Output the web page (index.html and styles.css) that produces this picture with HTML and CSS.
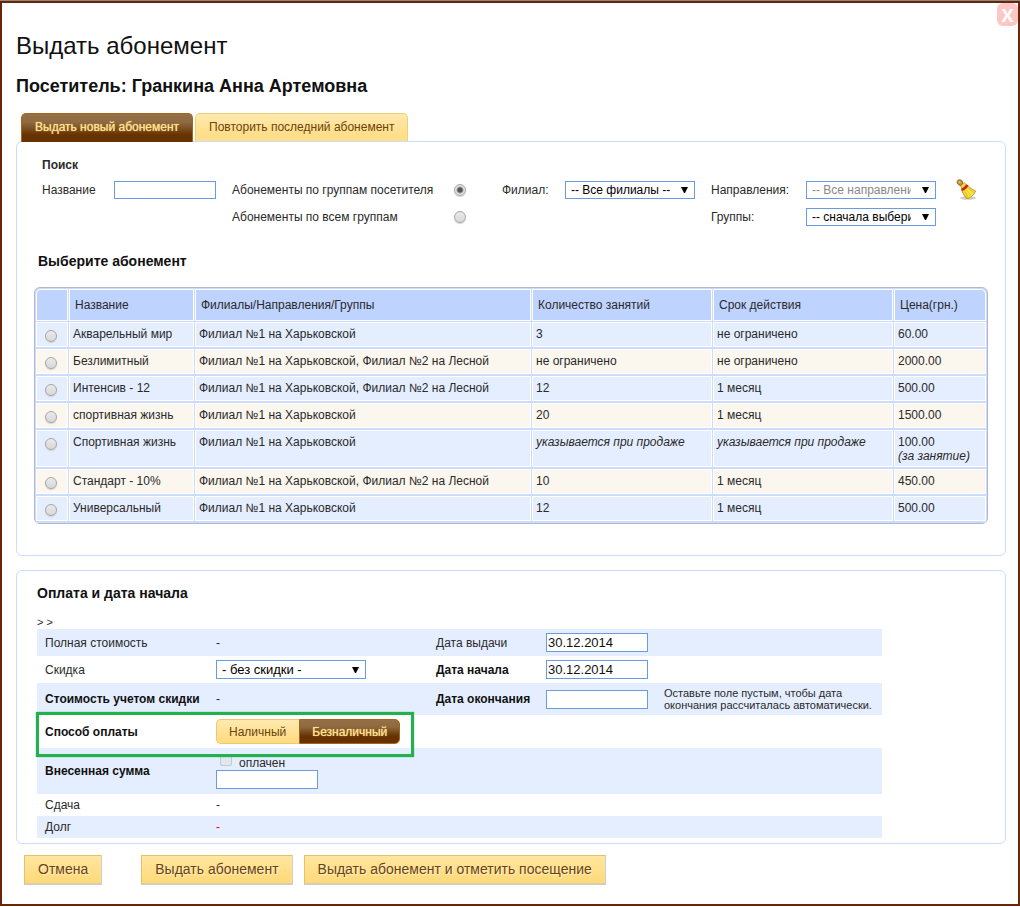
FILE: index.html
```html
<!DOCTYPE html>
<html lang="ru">
<head>
<meta charset="utf-8">
<title>Выдать абонемент</title>
<link rel="stylesheet" href="styles.css">
</head>
<body>
<main class="dialog">
  <button class="close" type="button" aria-label="Закрыть">X</button>
  <h1 class="title">Выдать абонемент</h1>
  <h2 class="visitor">Посетитель: Гранкина Анна Артемовна</h2>

  <nav class="tabs">
    <button class="tab tab-active" type="button">Выдать новый абонемент</button>
    <button class="tab" type="button">Повторить последний абонемент</button>
  </nav>

  <section class="panel panel-search">
    <form class="search">
      <h3 class="search-title">Поиск</h3>
      <div class="search-row">
        <label for="name">Название</label>
        <input class="field" id="name" type="text">
        <label class="scope" for="scope-own">Абонементы по группам посетителя</label>
        <input class="radio" id="scope-own" type="radio" name="scope" checked>
        <label class="branch" for="branch">Филиал:</label>
        <select class="select" id="branch"><option>-- Все филиалы --</option></select>
        <label class="direction" for="direction">Направления:</label>
        <select class="select select-muted" id="direction"><option>-- Все направления --</option></select>
        <button class="clear" type="button" aria-label="Очистить">
          <svg width="22" height="22" viewBox="0 0 22 22">
            <defs>
              <linearGradient id="straw" x1="0" y1="1" x2="1" y2="0">
                <stop offset="0" stop-color="#e0b80c"/><stop offset=".5" stop-color="#fbe94c"/><stop offset="1" stop-color="#e5bd18"/>
              </linearGradient>
            </defs>
            <ellipse cx="12" cy="19" rx="8" ry="1.800" fill="#b9b9b9" opacity=".7"/>
            <path d="M5.500 10.500 Q7 15.500 10 19 Q12.500 20.500 14.500 18.500 Q18.500 15.500 19.700 12 Q14.500 10 10.500 5.500Z" fill="url(#straw)" stroke="#a8860e" stroke-width=".7"/>
            <path d="M8.500 11.500l3.500 6.500M10 10l5 6.500M11.500 8.500l6 5" stroke="#d8b01c" stroke-width=".6" fill="none"/>
            <path d="M4.500 7L8 3.500L10.800 6L6 10Z" fill="#f3dc3a" stroke="#a8860e" stroke-width=".6"/>
            <path d="M5.500 10.800Q9.500 9.800 11.400 6" stroke="#d9190f" stroke-width="2.400" fill="none"/>
            <path d="M1.600 1.600Q3.600-.2 5.800 1.400Q7 3 6.500 4.800L4.500 6.500Q2.800 6.300 1.600 4.800Q.6 3 1.600 1.600Z" fill="#c8923c" stroke="#80541c" stroke-width=".8"/>
            <circle cx="3.500" cy="2.900" r="1" fill="#eac07a"/>
          </svg>
        </button>
      </div>
      <div class="search-row">
        <label class="scope" for="scope-all">Абонементы по всем группам</label>
        <input class="radio" id="scope-all" type="radio" name="scope">
        <label class="direction" for="group">Группы:</label>
        <select class="select" id="group"><option>-- сначала выберите --</option></select>
      </div>
    </form>

    <h3 class="section-title">Выберите абонемент</h3>
    <table class="plans">
      <colgroup>
        <col class="col-pick"><col class="col-name"><col><col class="col-term"><col class="col-term"><col class="col-price">
      </colgroup>
      <thead>
        <tr><th></th><th>Название</th><th>Филиалы/Направления/Группы</th><th>Количество занятий</th><th>Срок действия</th><th>Цена(грн.)</th></tr>
      </thead>
      <tbody>
        <tr><td><input class="radio" type="radio" name="plan" aria-label="Акварельный мир"></td><td>Акварельный мир</td><td>Филиал №1 на Харьковской</td><td>3</td><td>не ограничено</td><td>60.00</td></tr>
        <tr><td><input class="radio" type="radio" name="plan" aria-label="Безлимитный"></td><td>Безлимитный</td><td>Филиал №1 на Харьковской, Филиал №2 на Лесной</td><td>не ограничено</td><td>не ограничено</td><td>2000.00</td></tr>
        <tr><td><input class="radio" type="radio" name="plan" aria-label="Интенсив - 12"></td><td>Интенсив - 12</td><td>Филиал №1 на Харьковской, Филиал №2 на Лесной</td><td>12</td><td>1 месяц</td><td>500.00</td></tr>
        <tr><td><input class="radio" type="radio" name="plan" aria-label="спортивная жизнь"></td><td>спортивная жизнь</td><td>Филиал №1 на Харьковской</td><td>20</td><td>1 месяц</td><td>1500.00</td></tr>
        <tr><td><input class="radio" type="radio" name="plan" aria-label="Спортивная жизнь"></td><td>Спортивная жизнь</td><td>Филиал №1 на Харьковской</td><td><i>указывается при продаже</i></td><td><i>указывается при продаже</i></td><td>100.00<br><i>(за занятие)</i></td></tr>
        <tr><td><input class="radio" type="radio" name="plan" aria-label="Стандарт - 10%"></td><td>Стандарт - 10%</td><td>Филиал №1 на Харьковской, Филиал №2 на Лесной</td><td>10</td><td>1 месяц</td><td>450.00</td></tr>
        <tr><td><input class="radio" type="radio" name="plan" aria-label="Универсальный"></td><td>Универсальный</td><td>Филиал №1 на Харьковской</td><td>12</td><td>1 месяц</td><td>500.00</td></tr>
      </tbody>
    </table>
  </section>

  <section class="panel panel-payment">
    <h3 class="section-title">Оплата и дата начала</h3>
    <p class="crumbs">&gt; &gt;</p>
    <form class="payment">
      <div class="pay-row">
        <span>Полная стоимость</span><span>-</span>
        <label for="issued">Дата выдачи</label><input class="field date" id="issued" type="text" value="30.12.2014">
      </div>
      <div class="pay-row">
        <label for="discount">Скидка</label>
        <div><select class="select select-wide" id="discount"><option>- без скидки -</option></select></div>
        <label class="strong" for="starts">Дата начала</label><input class="field date" id="starts" type="text" value="30.12.2014">
      </div>
      <div class="pay-row pay-row-hint">
        <span class="strong">Стоимость учетом скидки</span><span>-</span>
        <label class="strong" for="ends">Дата окончания</label><input class="field date" id="ends" type="text">
        <span class="hint">Оставьте поле пустым, чтобы дата окончания рассчиталась автоматически.</span>
      </div>
      <div class="pay-row pay-row-method">
        <span class="strong">Способ оплаты</span>
        <div class="switch"><button class="switch-item" type="button">Наличный</button><button class="switch-item switch-on" type="button">Безналичный</button></div>
        <div class="marker"></div>
      </div>
      <div class="pay-row pay-row-sum">
        <label class="strong" for="sum">Внесенная сумма</label>
        <div class="sum">
          <label class="paid"><input class="check" type="checkbox" disabled>оплачен</label>
          <input class="field date" id="sum" type="text">
        </div>
      </div>
      <div class="pay-row pay-row-short"><span>Сдача</span><span>-</span></div>
      <div class="pay-row pay-row-short"><span>Долг</span><span class="debt">-</span></div>
    </form>
  </section>

  <footer class="actions">
    <button class="action action-cancel" type="button">Отмена</button>
    <button class="action" type="button">Выдать абонемент</button>
    <button class="action" type="button">Выдать абонемент и отметить посещение</button>
  </footer>
</main>
</body>
</html>
```

FILE: styles.css
```css
* { box-sizing: border-box; }

html { background: #fff; }

body {
  margin: 0;
  border-top: 1px solid #8a8a80;
  font: 12px/14px "Liberation Sans", Arial, sans-serif;
  color: #2a2a2a;
}

button, input, select { font: inherit; margin: 0; }
h1, h2, h3, p { margin: 0; }

.dialog {
  position: relative;
  min-height: calc(100vh - 2px);
  padding: 28px 12px 19px 14px;
  border: 2px solid #6b2408;
  background: #fff;
}

.close {
  position: absolute;
  top: 0;
  right: 0;
  width: 21px;
  height: 23px;
  padding: 0;
  border: 0;
  border-radius: 6px;
  background: #ffc6c6;
  color: #fff;
  font: bold 18px/22px "Open Sans", sans-serif;
}

.title { font-size: 24px; line-height: 30px; font-weight: normal; color: #111; }
.visitor { margin-top: 13px; font-size: 18px; line-height: 24px; color: #111; }

.tabs { display: flex; gap: 2px; margin-top: 15px; padding-left: 5px; }

.tab {
  height: 28px;
  padding: 0 13px 2px;
  border: 1px solid #ecd07c;
  border-bottom: 0;
  border-radius: 5px 5px 0 0;
  background: linear-gradient(#ffe9ae, #ffdf8c 70%);
  color: #6b430c;
}

.tab-active {
  position: relative;
  height: 29px;
  margin-bottom: -1px;
  padding-bottom: 3px;
  border-color: #a5661a;
  background: linear-gradient(#957048 0%, #8f6a40 30%, #663300 75%);
  color: #ffe08c;
  text-shadow: 0 0 1px #ffe08c;
}

.panel { border: 1px solid #ccdcff; border-radius: 6px; }
.panel-search { padding: 16px 17px 31px; }
.panel-payment { margin-top: 14px; padding: 14px 20px 5px; }

.search { padding-left: 8px; }
.search-title { font-size: 12px; line-height: 14px; font-weight: bold; margin-bottom: 4px; }

.search-row {
  display: grid;
  grid-template-columns: 72px 118px 222px 48px 63px 146px 95px 146px 1fr;
  align-items: center;
  height: 27px;
}
.search-row .scope { grid-column: 3; }
.search-row .direction { grid-column: 7; }

.field {
  width: 102px;
  height: 18px;
  padding: 0 1px;
  border: 1px solid #6a9ae0;
  background: #fff;
  color: #111;
}

.select {
  appearance: none;
  width: 130px;
  height: 18px;
  padding: 0 24px 0 5px;
  border: 1px solid #6a9ae0;
  border-radius: 0;
  background: #fff url("data:image/svg+xml,%3Csvg xmlns='http://www.w3.org/2000/svg' width='7' height='6'%3E%3Cpath d='M0 0h7L4 6H3z'/%3E%3C/svg%3E") no-repeat right 6px center;
  color: #000;
  line-height: 16px;
}
.select-muted { color: #888; }
.select-wide { display: block; width: 150px; height: 19px; font-size: 13px; }

.radio {
  appearance: none;
  display: block;
  width: 12px;
  height: 12px;
  border: 1px solid #a6a6a6;
  border-radius: 50%;
  background: linear-gradient(#eaeaea, #d8d8d8);
  box-shadow: 0 1px 1px #d0d0d0;
}
.radio:checked { background: radial-gradient(circle, #555 0 2px, #e4e4e4 4px); }

.clear { justify-self: start; width: 22px; height: 22px; padding: 0; margin-left: 4px; border: 0; background: none; }
.clear svg { display: block; }

.section-title { font-size: 14px; line-height: 16px; color: #111; }
.panel-search .section-title { margin: 23px 0 18px 4px; }

.plans {
  width: 100%;
  table-layout: fixed;
  border: 1px solid #b3b9c9;
  border-radius: 6px;
  border-spacing: 1px 0;
  background: #ccdcff;
  padding-top: 1px;
}
.col-pick { width: 32px; }
.col-name { width: 125px; }
.col-term { width: 180px; }
.col-price { width: 92px; }

.plans th,
.plans td {
  background-clip: padding-box;
  box-shadow: inset 0 0 0 1px #fff;
}
.plans th {
  height: 33px;
  padding: 0 6px;
  border-bottom: 1px solid #ccdcff;
  background-color: #bfd3ff;
  font-weight: normal;
  text-align: left;
}
.plans th:first-child { border-top-left-radius: 5px; }
.plans th:last-child { border-top-right-radius: 5px; }
.plans td {
  height: 27px;
  padding: 5px 4px 4px;
  border-bottom: 2px solid #ccdcff;
  background-color: #e5eeff;
  vertical-align: top;
}
.plans tr:nth-child(even) td { background-color: #fbf6ee; }
.plans td:first-child { padding: 8px 9px 0; }

.crumbs { margin-top: 15px; font-size: 11px; line-height: 13px; }

.payment { max-width: 845px; }

.pay-row {
  position: relative;
  display: grid;
  grid-template-columns: 171px 220px 110px 118px 1fr;
  align-items: center;
  min-height: 27px;
  padding-left: 8px;
}
.pay-row:nth-child(odd) { background: #e5eeff; }
.pay-row-hint { min-height: 32px; }
.pay-row-method { min-height: 33px; }
.pay-row-sum { min-height: 46px; }
.pay-row-short { min-height: 22px; }

.strong { font-weight: bold; color: #111; }
.date { height: 19px; font-size: 13px; }
.hint { font-size: 11px; line-height: 12px; padding-right: 6px; }
.debt { color: #f00000; }

.switch { display: flex; }
.switch-item {
  height: 25px;
  padding: 0 13px 0 12px;
  border: 1px solid #ecc870;
  border-right: 0;
  border-radius: 5px 0 0 5px;
  background: linear-gradient(#ffe9ae, #ffdb80);
  color: #6b430c;
}
.switch-on {
  padding: 0 12px;
  border: 1px solid #a5661a;
  border-radius: 0 5px 5px 0;
  background: linear-gradient(#957048 0%, #8f6a40 30%, #663300 70%);
  color: #ffe08c;
  text-shadow: 0 0 1px #ffe08c;
}

/* Highlight drawn over the payment method row */
.marker {
  position: absolute;
  z-index: 1;
  top: -3px;
  left: -1px;
  width: 378px;
  height: 45px;
  border: 3px solid #22b14c;
  box-shadow: 0 0 1px #22b14c;
  pointer-events: none;
}

.sum { display: grid; }
.paid { display: flex; align-items: center; gap: 7px; padding: 3px 0 0 4px; }
.check {
  appearance: none;
  width: 12px;
  height: 12px;
  margin-top: -6px;
  border: 1px solid #c4c8d0;
  border-radius: 2px;
  background: #e2e6ee;
}

.actions { display: flex; gap: 11px; margin-top: 11px; padding-left: 8px; }
.action {
  height: 30px;
  padding: 0 13px 1px;
  border: 1px solid #e6c06a;
  border-right-color: #cfcfcf;
  border-bottom: 2px solid #d4cdbc;
  background: linear-gradient(#ffe6a0, #ffd978);
  color: #6b430c;
  font-size: 14px;
  text-shadow: 1px 1px 1px #fff4d0;
}
.action-cancel { margin-right: 28px; }
```
